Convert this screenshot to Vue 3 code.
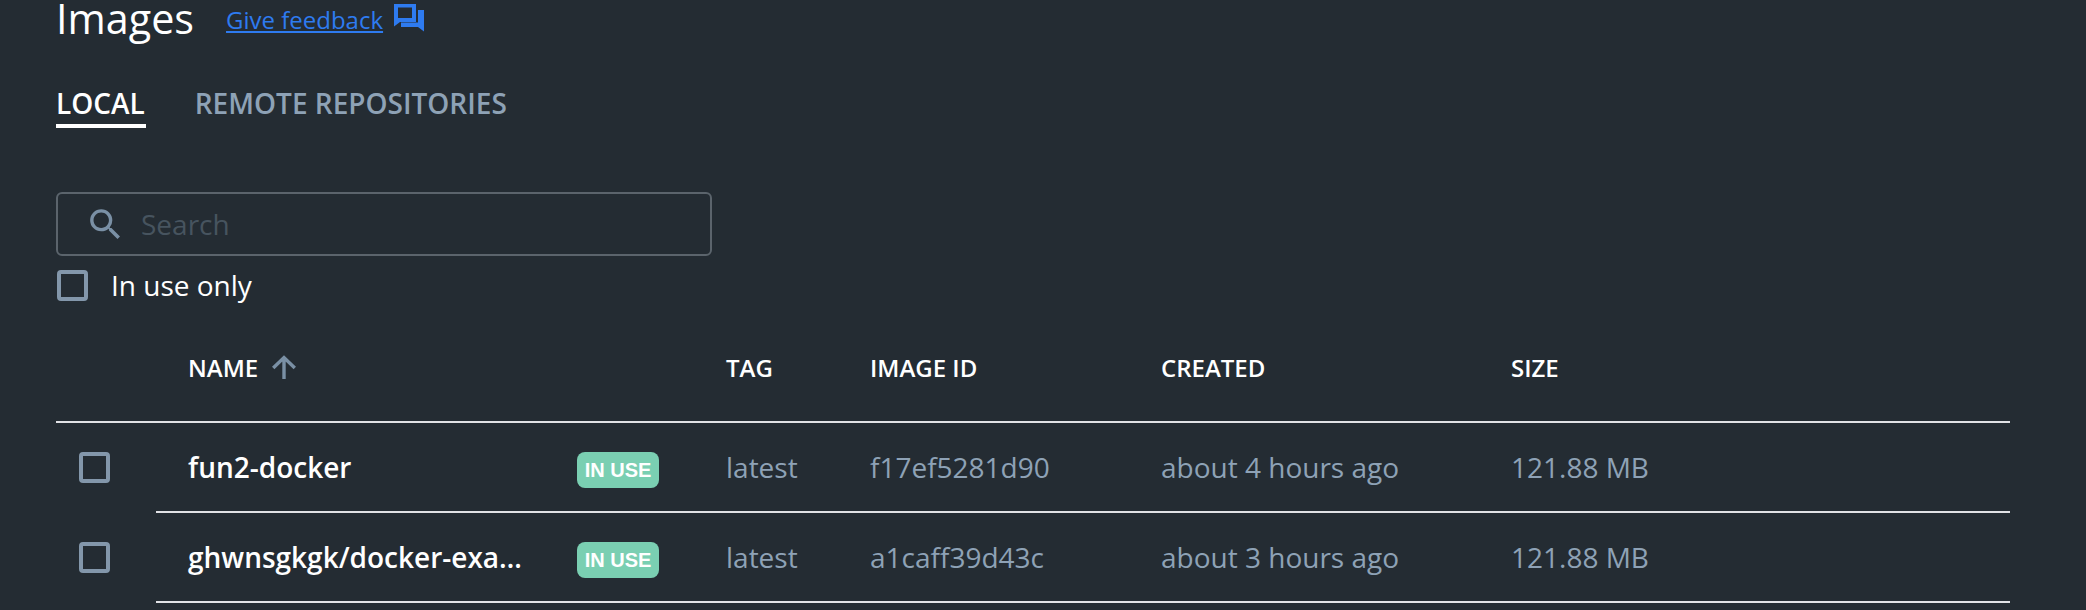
<script setup>
const columns = ['TAG', 'IMAGE ID', 'CREATED', 'SIZE']
const rows = [
  { name: 'fun2-docker', tag: 'latest', id: 'f17ef5281d90', created: 'about 4 hours ago', size: '121.88 MB' },
  { name: 'ghwnsgkgk/docker-exa…', tag: 'latest', id: 'a1caff39d43c', created: 'about 3 hours ago', size: '121.88 MB' }
]
</script>

<template>
  <main class="page">
    <header class="title-row">
      <h1 class="title">Images</h1>
      <a class="feedback" href="#">Give feedback</a>
      <svg class="feedback-icon" viewBox="0 0 30 28" aria-hidden="true">
        <path fill="currentColor" fill-rule="evenodd" d="M0 0h22v18H6l-6 4.500V0zm4 3.500V14h14V3.500H4z" />
        <path fill="currentColor" d="M24 6h6v21.500l-6-4.500H7v-4.500h17V6z" />
      </svg>
    </header>

    <nav class="tabs">
      <span class="tab active">LOCAL</span>
      <span class="tab">REMOTE REPOSITORIES</span>
    </nav>

    <div class="search">
      <svg class="search-icon" viewBox="0 0 24 24" aria-hidden="true">
        <path fill="currentColor" d="M15.5 14h-.79l-.28-.27A6.47 6.47 0 0 0 16 9.5 6.5 6.5 0 1 0 9.5 16c1.610 0 3.090-.59 4.230-1.570l.27.28v.79l5 4.990L20.490 19l-4.990-5zm-6 0C7.010 14 5 11.990 5 9.500S7.010 5 9.500 5 14 7.010 14 9.500 11.990 14 9.500 14z" />
      </svg>
      <span class="placeholder">Search</span>
    </div>

    <label class="filter">
      <span class="box"></span>
      <span>In use only</span>
    </label>

    <section class="table">
      <div class="row head">
        <span class="name-head">NAME
          <svg class="arrow" viewBox="0 0 24 24" aria-hidden="true">
            <path fill="none" stroke="currentColor" stroke-width="3.400" d="M12 24V2.500M1.200 13 12 2.500 22.800 13" />
          </svg>
        </span>
        <span v-for="c in columns" :key="c">{{ c }}</span>
      </div>
      <div v-for="r in rows" :key="r.id" class="row item">
        <span class="box row-box"></span>
        <span class="name">{{ r.name }}</span>
        <span class="badge">IN USE</span>
        <span class="cell">{{ r.tag }}</span>
        <span class="cell">{{ r.id }}</span>
        <span class="cell">{{ r.created }}</span>
        <span class="cell">{{ r.size }}</span>
      </div>
    </section>
  </main>
</template>

<style>
html, body { margin: 0; background: #242c33; }
</style>

<style scoped>
.page {
  width: 2086px;
  height: 610px;
  box-sizing: border-box;
  overflow: hidden;
  background: #242c33;
  color: #fff;
  font-family: "Open Sans", sans-serif;
  padding: 0 76px 0 56px;
}
.title-row {
  display: flex;
  align-items: center;
  height: 40px;
}
.title {
  margin: 0 0 4px;
  font-size: 41.300px;
  font-weight: 400;
  line-height: 40px;
}
.feedback {
  margin-left: 32px;
  color: #2e7bf0;
  font-size: 24px;
  line-height: 40px;
}
.feedback-icon {
  width: 30px;
  height: 28px;
  margin-left: 11px;
  margin-bottom: 4px;
  color: #2e7bf0;
}
.tabs {
  display: flex;
  gap: 49px;
  margin-top: 45px;
  height: 43px;
}
.tab {
  font-size: 28px;
  font-weight: 600;
  line-height: 36px;
  color: #8ea2b6;
}
.tab.active {
  color: #fff;
  padding-right: 1px;
  border-bottom: 4px solid #fff;
  height: 39px;
}
.search {
  display: flex;
  align-items: center;
  width: 656px;
  height: 64px;
  box-sizing: border-box;
  margin-top: 64px;
  padding-left: 27px;
  border: 2px solid #5b646c;
  border-radius: 6px;
}
.search-icon {
  width: 41px;
  height: 41px;
  color: #7a90a5;
}
.placeholder {
  margin-left: 15px;
  font-size: 28px;
  color: #47545f;
}
.filter {
  display: flex;
  align-items: center;
  gap: 23px;
  margin-top: 13px;
  padding-left: 1px;
  font-size: 28px;
  line-height: 32px;
}
.box {
  display: block;
  width: 31px;
  height: 31px;
  box-sizing: border-box;
  border: 4px solid #8397ab;
  border-radius: 4px;
}
.row {
  display: grid;
  grid-template-columns: 132px 389px 149px 144px 291px 350px 1fr;
  align-items: center;
}
.head {
  height: 122px;
  padding-top: 12px;
  border-bottom: 2px solid #e1e2e6;
  box-sizing: border-box;
  font-size: 24px;
  font-weight: 600;
}
.name-head {
  grid-column: 1 / 4;
  display: flex;
  align-items: center;
  gap: 14px;
  padding-left: 132px;
}
.arrow {
  width: 24px;
  height: 24px;
  color: #7a90a5;
}
.item {
  height: 90px;
  padding-bottom: 2px;
  box-sizing: border-box;
  background: linear-gradient(#e1e2e6, #e1e2e6) 100px 100% / calc(100% - 100px) 2px no-repeat;
}
.row-box {
  margin-left: 23px;
}
.name {
  font-size: 28px;
  font-weight: 600;
}
.badge {
  width: 82px;
  height: 36px;
  margin-top: 5px;
  border-radius: 8px;
  background: #7acfb2;
  color: #fff;
  font-family: "Liberation Sans", sans-serif;
  font-size: 20px;
  font-weight: 700;
  line-height: 36px;
  text-align: center;
}
.cell {
  font-size: 28px;
  color: #8ea2b6;
}
</style>
